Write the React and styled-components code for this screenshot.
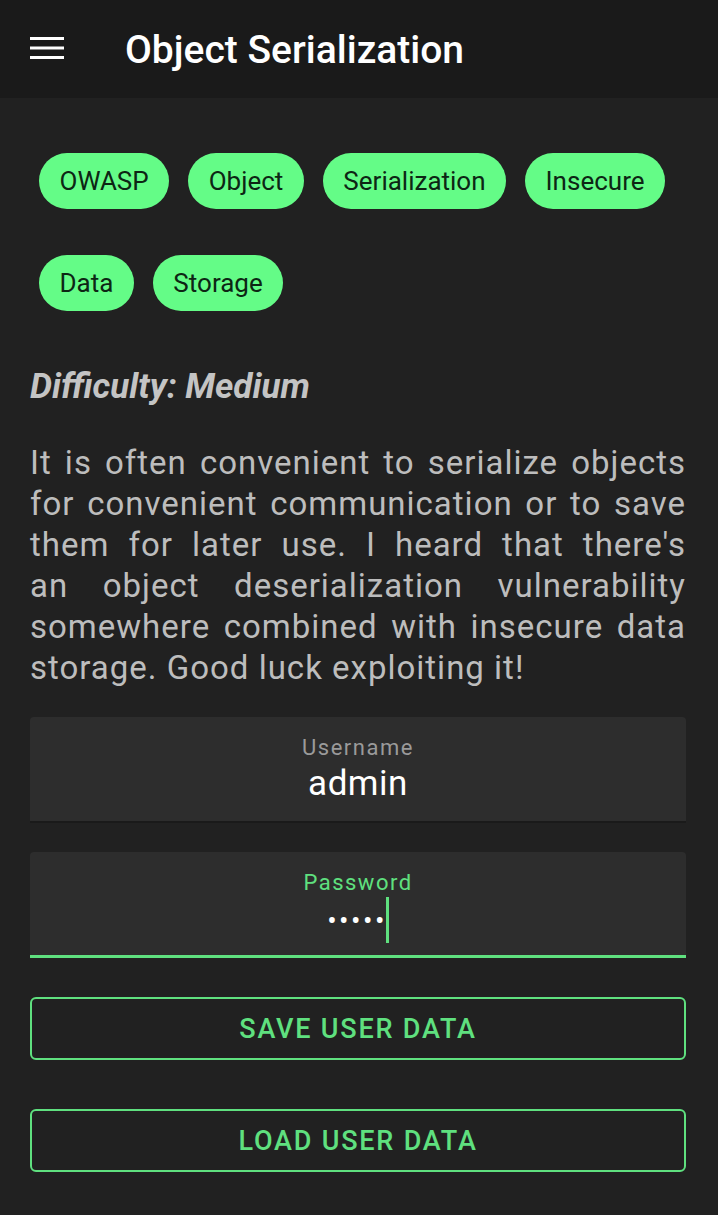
import styled, { createGlobalStyle } from "styled-components";

const GREEN = "#64fc87";
const ACCENT = "#5fe07f";

const tags = [
  ["OWASP", "Object", "Serialization", "Insecure"],
  ["Data", "Storage"],
];

// line breaks as they fall in the app's justified text view
const descriptionLines = [
  "It is often convenient to serialize objects",
  "for convenient communication or to save",
  "them for later use. I heard that there's",
  "an object deserialization vulnerability",
  "somewhere combined with insecure data",
  "storage. Good luck exploiting it!",
];

const GlobalStyle = createGlobalStyle`
  * { box-sizing: border-box; }
  body {
    margin: 0;
    background: #212121;
    font-family: Roboto, "Noto Sans", sans-serif;
  }
`;

const App = () => {
  return (
    <Page>
      <GlobalStyle />
      <TopBar>
        <MenuIcon viewBox="0 0 34 22" aria-hidden="true">
          <rect x="0" y="0" width="34" height="3" />
          <rect x="0" y="9.5" width="34" height="3" />
          <rect x="0" y="19" width="34" height="3" />
        </MenuIcon>
        <Title>Object Serialization</Title>
      </TopBar>
      <Content>
        <TagList>
          {tags.map((row, i) => (
            <TagRow key={i}>
              {row.map((t) => (
                <Tag key={t}>{t}</Tag>
              ))}
            </TagRow>
          ))}
        </TagList>
        <Difficulty>Difficulty: Medium</Difficulty>
        <Description>
          {descriptionLines.map((line, i) => (
            <DescLine key={i} $last={i === descriptionLines.length - 1}>
              {line}
            </DescLine>
          ))}
        </Description>
        <Field>
          <FieldLabel>Username</FieldLabel>
          <FieldValue>admin</FieldValue>
        </Field>
        <Field $focused>
          <FieldLabel $focused>Password</FieldLabel>
          <FieldValue $dots>
            •••••<Caret />
          </FieldValue>
        </Field>
        <Actions>
          <OutlineButton>Save user data</OutlineButton>
          <OutlineButton>Load user data</OutlineButton>
        </Actions>
      </Content>
    </Page>
  );
};

const Page = styled.div`
  width: 718px;
  min-height: 1215px;
  background: #212121;
`;

const TopBar = styled.header`
  height: 98px;
  background: #1a1a1a;
  display: flex;
  align-items: center;
  padding-left: 30px;
`;

const MenuIcon = styled.svg`
  width: 34px;
  height: 22px;
  fill: #ffffff;
  margin-right: 61px;
  margin-top: -3px;
`;

const Title = styled.h1`
  margin: 0;
  font-family: Roboto, sans-serif;
  font-weight: 500;
  font-size: 39px;
  color: #ffffff;
  letter-spacing: 0;
  line-height: 1;
  margin-top: 2px;
`;

const Content = styled.main`
  padding: 55px 32px 0 30px;
`;

const TagList = styled.div`
  display: flex;
  flex-direction: column;
  gap: 46px;
  padding-left: 9px;
`;

const TagRow = styled.div`
  display: flex;
  gap: 19px;
`;

const Tag = styled.span`
  height: 56px;
  padding: 0 20.5px;
  display: flex;
  align-items: center;
  border-radius: 28px;
  background: ${GREEN};
  color: #0d2614;
  font-size: 26px;
  font-family: Roboto, sans-serif;
`;

const Difficulty = styled.div`
  margin-top: 54px;
  font-family: Roboto, sans-serif;
  font-weight: 700;
  font-style: italic;
  font-size: 35px;
  line-height: 44px;
  color: #c4c4c4;
`;

const Description = styled.div`
  margin-top: 33px;
  font-family: Roboto, sans-serif;
  font-size: 33px;
  line-height: 41px;
  letter-spacing: 1px;
  color: #bdbdbd;
`;

const DescLine = styled.div`
  white-space: nowrap;
  text-align: justify;
  text-align-last: ${(p) => (p.$last ? "left" : "justify")};
`;

const Field = styled.div`
  margin-top: 29px;
  height: 106px;
  background: #2d2d2d;
  border-radius: 4px 4px 0 0;
  border-bottom: ${(p) => (p.$focused ? `3px solid ${ACCENT}` : "2px solid #1a1a1a")};
  display: flex;
  flex-direction: column;
  align-items: center;
  padding-top: 18px;
`;

const FieldLabel = styled.div`
  font-family: Roboto, sans-serif;
  font-size: 22px;
  letter-spacing: 1.5px;
  color: ${(p) => (p.$focused ? ACCENT : "#9a9a9a")};
  line-height: 26px;
`;

const FieldValue = styled.div`
  display: flex;
  align-items: center;
  margin-top: 3px;
  font-family: Roboto, sans-serif;
  font-size: ${(p) => (p.$dots ? "28px" : "35px")};
  letter-spacing: ${(p) => (p.$dots ? "2.5px" : "0.5px")};
  line-height: 40px;
  color: #ffffff;
`;

const Caret = styled.span`
  display: inline-block;
  width: 3px;
  height: 46px;
  background: ${ACCENT};
  margin-left: -1px;
  margin-top: -2px;
`;

const Actions = styled.div`
  margin-top: 39px;
  display: flex;
  flex-direction: column;
  gap: 49px;
`;

const OutlineButton = styled.button`
  height: 63px;
  width: 100%;
  background: transparent;
  border: 2px solid ${ACCENT};
  border-radius: 6px;
  color: ${ACCENT};
  font-family: Roboto, sans-serif;
  font-weight: 500;
  font-size: 27px;
  letter-spacing: 1.8px;
  text-transform: uppercase;
`;

export default App;
